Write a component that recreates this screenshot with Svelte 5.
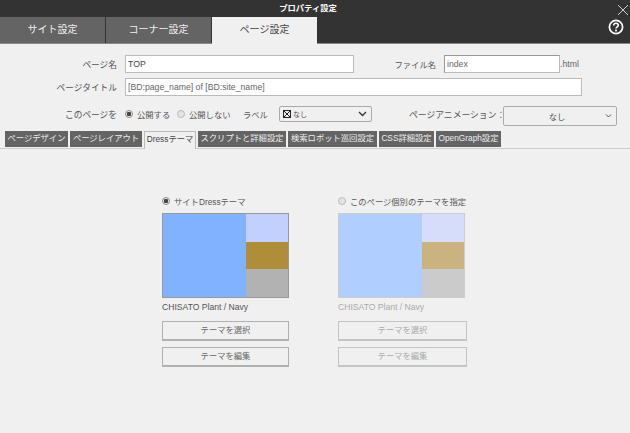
<script>
  const mainTabs = ['サイト設定', 'コーナー設定', 'ページ設定'];
  const subTabs = [
    { label: 'ページデザイン', w: 63 },
    { label: 'ページレイアウト', w: 72 },
    { label: 'Dressテーマ', w: 52, active: true },
    { label: 'スクリプトと詳細設定', w: 88 },
    { label: '検索ロボット巡回設定', w: 89 },
    { label: 'CSS詳細設定', w: 55 },
    { label: 'OpenGraph設定', w: 65 },
  ];
  const themes = [
    { label: 'サイトDressテーマ', checked: true, disabled: false },
    { label: 'このページ個別のテーマを指定', checked: false, disabled: true },
  ];
</script>

<div class="window">
  <header class="head">
    <div class="title">プロパティ設定</div>
    <nav class="main-tabs">
      {#each mainTabs as tab, i}
        <div class="main-tab" class:active={i === 2}>{tab}</div>
      {/each}
    </nav>
    <svg class="close" width="12" height="12" viewBox="0 0 12 12">
      <path d="M1 1 L11 11 M11 1 L1 11" stroke="#d0d0d0" stroke-width="1" fill="none" />
    </svg>
    <svg class="help" width="16" height="16" viewBox="0 0 16 16">
      <circle cx="8" cy="8" r="6.6" stroke="#fff" stroke-width="1.7" fill="none" />
      <path d="M5.7 6.4 C5.7 3.6 10.3 3.6 10.3 6.2 C10.3 7.8 8 7.8 8 9.6" stroke="#fff" stroke-width="1.6" fill="none" />
      <rect x="7.1" y="10.6" width="1.8" height="1.8" fill="#fff" />
    </svg>
  </header>

  <section class="form">
    <div class="row first">
      <span class="label name-label">ページ名</span>
      <div class="input name-input">TOP</div>
      <span class="label file-label">ファイル名</span>
      <div class="input file-input">index</div>
      <span class="ext">.html</span>
    </div>
    <div class="row second">
      <span class="label name-label">ページタイトル</span>
      <div class="input title-input">[BD:page_name] of [BD:site_name]</div>
    </div>
    <div class="row third">
      <span class="label name-label">このページを</span>
      <span class="radio-wrap publish"><span class="radio on"></span>公開する</span>
      <span class="radio-wrap unpublish"><span class="radio"></span>公開しない</span>
      <span class="label label-label">ラベル</span>
      <div class="select label-select">
        <span class="box-x"></span><span class="none">なし</span>
        <svg class="chev" width="9" height="6" viewBox="0 0 9 6"><path d="M1 1 L4.5 4.5 L8 1" stroke="#333" stroke-width="1.3" fill="none" /></svg>
      </div>
      <span class="label anim-label">ページアニメーション：</span>
      <div class="select anim-select">
        <span class="anim-value">なし</span>
        <svg class="chev" width="7" height="5" viewBox="0 0 7 5"><path d="M1 1 L3.5 3.5 L6 1" stroke="#555" stroke-width="1" fill="none" /></svg>
      </div>
    </div>
  </section>

  <nav class="sub-tabs">
    {#each subTabs as tab}
      <div class="sub-tab" class:active={tab.active} style="width: {tab.w}px">{tab.label}</div>
    {/each}
  </nav>

  <section class="themes">
    {#each themes as theme}
      <div class="theme" class:disabled={theme.disabled}>
        <div class="theme-radio"><span class="radio" class:on={theme.checked}></span>{theme.label}</div>
        <div class="swatch">
          <div class="swatch-main"></div>
          <div class="swatch-side">
            <div class="s1"></div>
            <div class="s2"></div>
            <div class="s3"></div>
          </div>
        </div>
        <div class="caption">CHISATO Plant / Navy</div>
        <div class="btn">テーマを選択</div>
        <div class="btn">テーマを編集</div>
      </div>
    {/each}
  </section>
</div>

<style>
  :global(body) {
    background: #f0f0f0;
  }
  .window {
    width: 630px;
    height: 433px;
    overflow: hidden;
    background: #f0f0f0;
    color: #555;
    font-family: "Liberation Sans", "Noto Sans CJK JP", sans-serif;
    font-size: 8.3px;
  }
  .head {
    position: relative;
    height: 44px;
    background: #333;
    border-bottom: 1px solid #888;
    box-sizing: border-box;
  }
  .title {
    height: 17px;
    line-height: 16px;
    padding-right: 14px;
    text-align: center;
    color: #fff;
    font-size: 8.3px;
    font-weight: 700;
  }
  .main-tabs {
    display: flex;
    gap: 1px;
  }
  .main-tab {
    width: 105px;
    height: 26px;
    line-height: 25px;
    text-align: center;
    background: #646464;
    color: #f0f0f0;
    font-size: 10px;
  }
  .main-tab.active {
    background: #f0f0f0;
    color: #444;
    height: 27px;
    position: relative;
  }
  .close {
    position: absolute;
    top: 4px;
    right: 1px;
  }
  .help {
    position: absolute;
    top: 19px;
    right: 6px;
  }
  .form {
    padding-top: 11px;
  }
  .row {
    display: flex;
    align-items: center;
  }
  .first {
    height: 18px;
  }
  .second {
    height: 18px;
    margin-top: 5px;
  }
  .third {
    height: 16px;
    margin-top: 10px;
  }
  .label {
    white-space: nowrap;
  }
  .name-label {
    width: 117px;
    text-align: right;
    flex: none;
    font-size: 8.7px;
  }
  .input {
    box-sizing: border-box;
    height: 18px;
    line-height: 16px;
    background: #fff;
    border: 1px solid #bbb;
    padding-left: 2px;
    font-size: 8.7px;
    color: #444;
    flex: none;
  }
  .name-input {
    width: 229px;
    margin-left: 8px;
  }
  .file-label {
    width: 82px;
    text-align: right;
  }
  .file-input {
    width: 116px;
    margin-left: 8px;
    border-color: #999 #bbb #bbb #999;
    color: #666;
  }
  .ext {
    color: #666;
    font-size: 8.7px;
  }
  .title-input {
    width: 457px;
    margin-left: 8px;
    color: #666;
  }
  .radio {
    display: inline-block;
    box-sizing: border-box;
    width: 8px;
    height: 8px;
    border-radius: 50%;
    background: #e4e4e4;
    border: 1px solid #bbb;
    margin-right: 4px;
    flex: none;
  }
  .radio.on {
    background: radial-gradient(circle, #444 0 2px, #eee 2.5px);
    border-color: #888;
  }
  .radio-wrap {
    display: inline-flex;
    align-items: center;
    white-space: nowrap;
  }
  .publish {
    width: 52px;
    margin-left: 8px;
  }
  .unpublish {
    width: 66px;
  }
  .label-label {
    width: 36px;
  }
  .select {
    position: relative;
    display: flex;
    align-items: center;
    box-sizing: border-box;
    border: 1px solid #aaa;
    border-radius: 2px;
    flex: none;
  }
  .label-select {
    width: 93px;
    height: 16px;
    padding-left: 3px;
  }
  .box-x {
    box-sizing: border-box;
    width: 8px;
    height: 8px;
    margin-right: 2px;
    border: 1px solid #222;
    background:
      linear-gradient(45deg, transparent 42%, #222 42% 58%, transparent 58%),
      linear-gradient(-45deg, transparent 42%, #222 42% 58%, transparent 58%);
  }
  .none {
    font-size: 7px;
  }
  .chev {
    position: absolute;
    right: 4px;
    top: 50%;
    transform: translateY(-50%);
  }
  .anim-label {
    width: 95px;
    margin-left: 37px;
    flex: none;
    text-align: right;
    font-size: 8.8px;
  }
  .anim-select {
    align-self: flex-start;
    width: 114px;
    height: 20px;
    justify-content: center;
    padding-right: 6px;
    margin-left: -1px;
  }
  .sub-tabs {
    display: flex;
    gap: 2px;
    height: 17px;
    margin-top: 9px;
    padding-left: 5px;
    border-bottom: 1px solid #ccc;
  }
  .sub-tab {
    flex: none;
    height: 16px;
    line-height: 15px;
    text-align: center;
    background: #646464;
    color: #eee;
    font-size: 8.3px;
    white-space: nowrap;
    overflow: hidden;
  }
  .sub-tab.active {
    box-sizing: border-box;
    height: 18px;
    background: #f0f0f0;
    color: #444;
    border: 1px solid #bbb;
    border-bottom: none;
  }
  .themes {
    display: flex;
    padding: 45px 0 0 162px;
    gap: 49px;
  }
  .theme {
    width: 127px;
  }
  .theme + .theme {
    width: 129px;
  }
  .theme-radio {
    display: flex;
    align-items: center;
    height: 14px;
    white-space: nowrap;
  }
  .swatch {
    display: flex;
    box-sizing: border-box;
    width: 127px;
    height: 85px;
    margin-top: 5px;
    border: 1px solid #999;
  }
  .swatch-main {
    flex: 1;
    background: #80b2ff;
  }
  .swatch-side {
    width: 42px;
    display: flex;
    flex-direction: column;
  }
  .s1 { flex: 1; background: #c2d0ff; }
  .s2 { flex: 1; background: #b08d38; }
  .s3 { flex: 1; background: #b2b2b2; }
  .caption {
    height: 15px;
    line-height: 14px;
    margin-top: 2px;
    font-size: 8.6px;
  }
  .btn {
    box-sizing: border-box;
    height: 20px;
    line-height: 17px;
    margin-top: 6px;
    text-align: center;
    border: 1px solid #b0b0b0;
    border-bottom-width: 2px;
    color: #666;
  }
  .disabled .swatch {
    border-color: #ccc;
  }
  .disabled .swatch-main { background: #b0ceff; }
  .disabled .s1 { background: #d5ddfb; }
  .disabled .s2 { background: #cbb381; }
  .disabled .s3 { background: #cbcbcb; }
  .disabled .caption {
    color: #aaa;
  }
  .disabled .btn {
    color: #aaa;
    border-color: #c4c4c4;
  }
</style>
